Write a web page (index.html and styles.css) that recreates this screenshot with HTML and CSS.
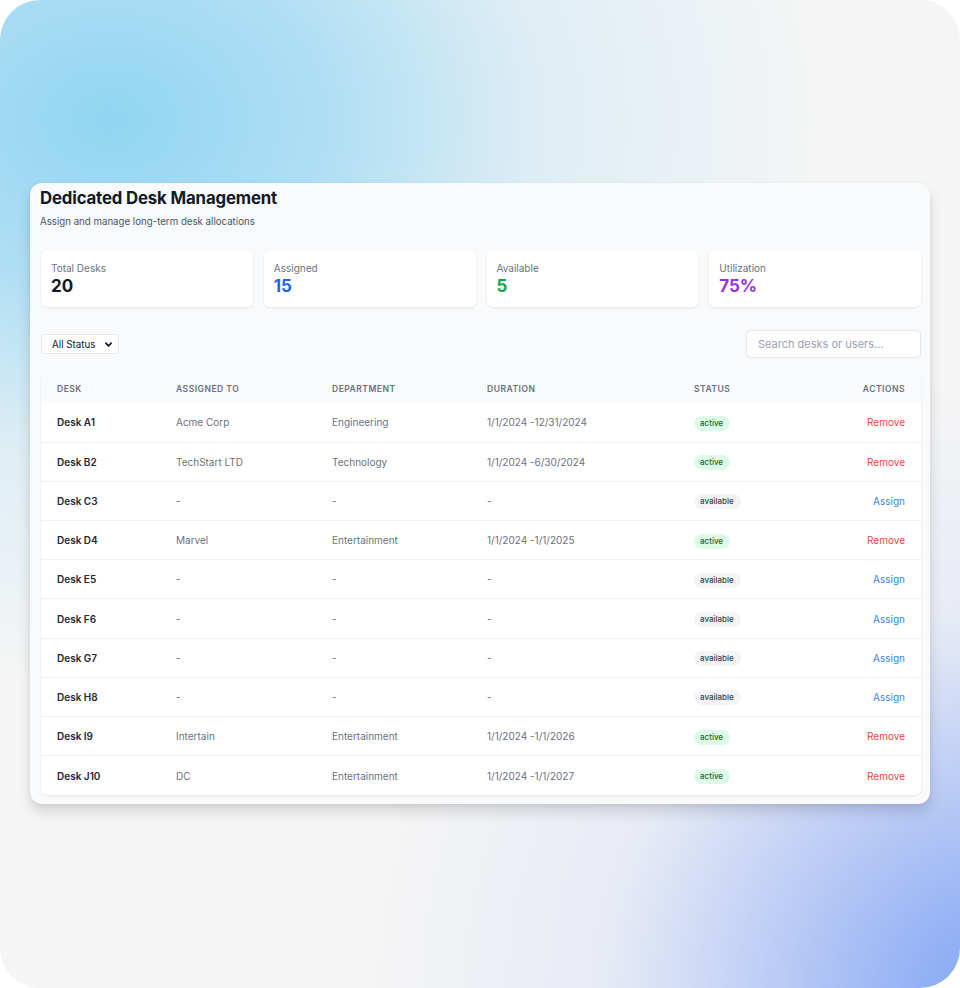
FILE: index.html
```html
<!DOCTYPE html>
<html lang="en">
<head>
<meta charset="utf-8">
<title>Dedicated Desk Management</title>
<link rel="stylesheet" href="styles.css">
</head>
<body>
<div class="frame">
  <div class="card">
    <h1 class="title">Dedicated Desk Management</h1>
    <p class="subtitle">Assign and manage long-term desk allocations</p>

    <div class="stats">
      <div class="stat"><div class="stat-label">Total Desks</div><div class="stat-value">20</div></div>
      <div class="stat"><div class="stat-label">Assigned</div><div class="stat-value blue">15</div></div>
      <div class="stat"><div class="stat-label">Available</div><div class="stat-value green">5</div></div>
      <div class="stat"><div class="stat-label">Utilization</div><div class="stat-value purple">75%</div></div>
    </div>

    <div class="toolbar">
      <div class="select">
        <span>All Status</span>
        <svg width="9" height="9" viewBox="0 0 10 10"><path d="M2 3.5 L5 6.5 L8 3.5" fill="none" stroke="#111827" stroke-width="1.8" stroke-linecap="round" stroke-linejoin="round"/></svg>
      </div>
      <div class="search">Search desks or users...</div>
    </div>

    <div class="table-wrap">
      <table class="desks">
        <colgroup>
          <col class="c1"><col class="c2"><col class="c3"><col class="c4"><col class="c5"><col class="c6">
        </colgroup>
        <thead>
          <tr><th>Desk</th><th>Assigned To</th><th>Department</th><th>Duration</th><th>Status</th><th class="right">Actions</th></tr>
        </thead>
        <tbody>
          <tr><td class="desk">Desk A1</td><td>Acme Corp</td><td>Engineering</td><td>1/1/2024 -12/31/2024</td><td class="status"><span class="badge active">active</span></td><td class="right"><span class="remove">Remove</span></td></tr>
          <tr><td class="desk">Desk B2</td><td>TechStart LTD</td><td>Technology</td><td>1/1/2024 -6/30/2024</td><td class="status"><span class="badge active">active</span></td><td class="right"><span class="remove">Remove</span></td></tr>
          <tr><td class="desk">Desk C3</td><td>-</td><td>-</td><td>-</td><td class="status"><span class="badge avail">available</span></td><td class="right"><span class="assign">Assign</span></td></tr>
          <tr><td class="desk">Desk D4</td><td>Marvel</td><td>Entertainment</td><td>1/1/2024 -1/1/2025</td><td class="status"><span class="badge active">active</span></td><td class="right"><span class="remove">Remove</span></td></tr>
          <tr><td class="desk">Desk E5</td><td>-</td><td>-</td><td>-</td><td class="status"><span class="badge avail">available</span></td><td class="right"><span class="assign">Assign</span></td></tr>
          <tr><td class="desk">Desk F6</td><td>-</td><td>-</td><td>-</td><td class="status"><span class="badge avail">available</span></td><td class="right"><span class="assign">Assign</span></td></tr>
          <tr><td class="desk">Desk G7</td><td>-</td><td>-</td><td>-</td><td class="status"><span class="badge avail">available</span></td><td class="right"><span class="assign">Assign</span></td></tr>
          <tr><td class="desk">Desk H8</td><td>-</td><td>-</td><td>-</td><td class="status"><span class="badge avail">available</span></td><td class="right"><span class="assign">Assign</span></td></tr>
          <tr><td class="desk">Desk I9</td><td>Intertain</td><td>Entertainment</td><td>1/1/2024 -1/1/2026</td><td class="status"><span class="badge active">active</span></td><td class="right"><span class="remove">Remove</span></td></tr>
          <tr><td class="desk">Desk J10</td><td>DC</td><td>Entertainment</td><td>1/1/2024 -1/1/2027</td><td class="status"><span class="badge active">active</span></td><td class="right"><span class="remove">Remove</span></td></tr>
        </tbody>
      </table>
    </div>
  </div>
</div>
</body>
</html>
```

FILE: styles.css
```css
* { box-sizing: border-box; }
html, body { margin: 0; padding: 0; background: #ffffff; }
body { font-family: Inter, "Noto Sans", "Liberation Sans", sans-serif; color: #111827; }

.frame {
  width: 960px;
  height: 988px;
  border-radius: 40px;
  overflow: hidden;
  padding: 183px 30px 0 30px;
  background:
    radial-gradient(ellipse 720px 560px at 110px 120px, rgba(145, 213, 242, 1) 0%, rgba(158, 217, 243, 0.8) 30%, rgba(195, 228, 244, 0.45) 60%, rgba(245, 245, 245, 0) 100%),
    radial-gradient(ellipse 640px 620px at 1000px 1000px, rgba(128, 162, 245, 1) 0%, rgba(155, 182, 245, 0.75) 30%, rgba(205, 216, 245, 0.35) 62%, rgba(245, 245, 245, 0) 100%),
    #f5f5f5;
}

.card {
  width: 900px;
  background: #f8fafc;
  border-radius: 12px;
  padding: 2px 9px 9px 11px;
  box-shadow: 0 8px 14px rgba(0, 0, 0, 0.13), 0 2px 4px rgba(0, 0, 0, 0.05);
}

.title {
  margin: 0;
  font-size: 16.8px;
  line-height: 26px;
  font-weight: 700;
  color: #111827;
  letter-spacing: -0.15px;
  margin-left: -1px;
}

.subtitle {
  margin: 3px 0 0 -1px;
  font-size: 9.7px;
  line-height: 16px;
  color: #4b5563;
}

.stats {
  margin-top: 20px;
  display: grid;
  grid-template-columns: repeat(4, 1fr);
  gap: 11px;
}

.stat {
  background: #ffffff;
  border-radius: 6px;
  height: 57px;
  padding: 11px 10px 0 10px;
  box-shadow: 0 1px 3px rgba(0, 0, 0, 0.08);
}

.stat-label {
  font-size: 10px;
  line-height: 14px;
  color: #6b7280;
}

.stat-value {
  font-size: 17px;
  line-height: 22px;
  font-weight: 700;
  color: #111827;
}
.stat-value.blue { color: #2563eb; }
.stat-value.green { color: #16a34a; }
.stat-value.purple { color: #9333ea; }

.toolbar {
  margin-top: 23px;
  display: flex;
  justify-content: space-between;
  align-items: center;
  height: 28px;
}

.select {
  width: 78px;
  height: 20px;
  background: #ffffff;
  border: 1px solid #e5e7eb;
  border-radius: 4px;
  display: flex;
  align-items: center;
  justify-content: space-between;
  padding: 0 5px 0 10px;
  font-size: 9.8px;
  color: #111827;
}

.search {
  width: 175px;
  height: 28px;
  background: #ffffff;
  border: 1px solid #e5e7eb;
  border-radius: 5px;
  padding: 0 11px;
  display: flex;
  align-items: center;
  font-size: 11px;
  color: #9ca3af;
}

.table-wrap {
  margin-top: 17px;
  background: #ffffff;
  border-radius: 6px;
  overflow: hidden;
  box-shadow: 0 1px 3px rgba(0, 0, 0, 0.08);
}

.desks {
  width: 100%;
  border-collapse: collapse;
  table-layout: fixed;
}
.c1 { width: 119px; }
.c2 { width: 156px; }
.c3 { width: 155px; }
.c4 { width: 207px; }
.c5 { width: 140px; }
.c6 { width: auto; }

.desks th {
  background: #f9fafb;
  height: 28px;
  padding: 0 16px;
  text-align: left;
  font-size: 8.5px;
  font-weight: 600;
  letter-spacing: 0.06em;
  text-transform: uppercase;
  color: #6b7280;
}

.desks td {
  height: 39.2px;
  padding: 0 16px;
  font-size: 10px;
  color: #6b7280;
  border-top: 1px solid #eef0f3;
  white-space: nowrap;
}
.desks tbody tr:first-child td { border-top: none; }

.desks td.desk { color: #1f2937; font-weight: 600; }
.desks .right { text-align: right; }
.desks td.status { line-height: 15px; padding-top: 2px; }

.badge {
  display: inline-block;
  font-size: 8px;
  line-height: 15px;
  height: 15px;
  padding: 0 7px 0 6px;
  border-radius: 9999px;
  font-weight: 500;
  vertical-align: top;
}
.badge.active { background: #dcfce7; color: #166534; }
.badge.avail { background: #f3f4f6; color: #374151; }

.remove { color: #ef4444; }
.assign { color: #3b82f6; }
```
